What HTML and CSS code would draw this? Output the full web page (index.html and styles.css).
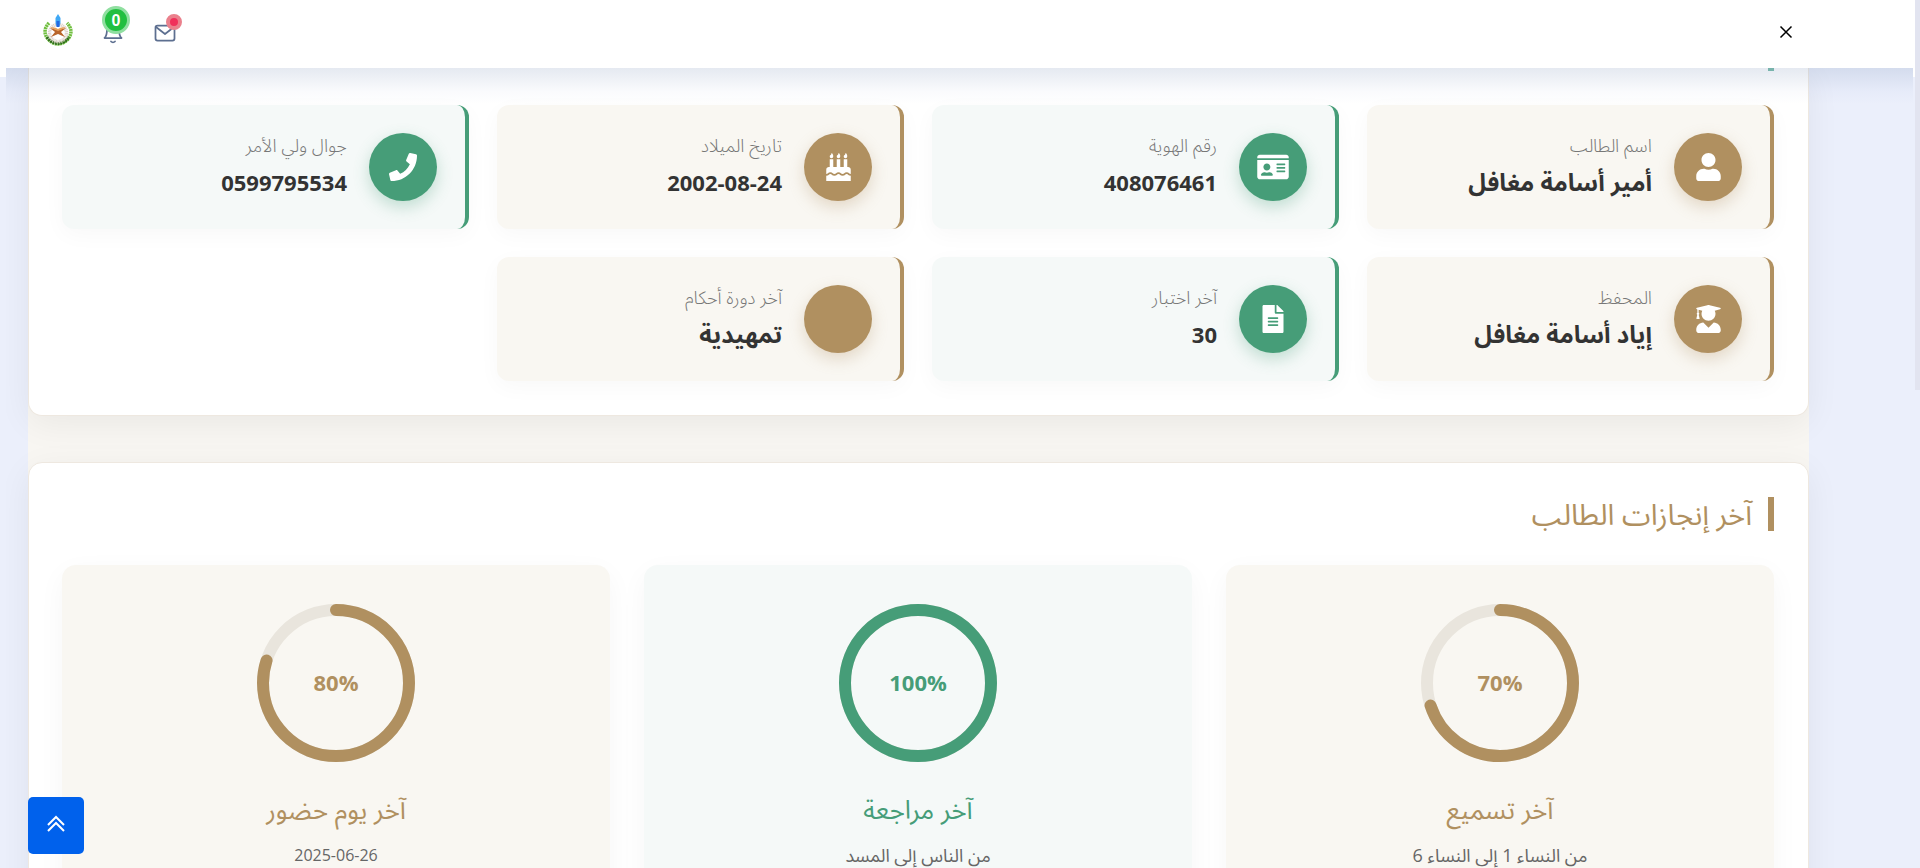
FILE: index.html
```html
<!DOCTYPE html>
<html lang="ar" dir="rtl">
<head>
<meta charset="utf-8">
<meta name="viewport" content="width=device-width, initial-scale=1">
<title>لوحة الطالب</title>
<link rel="stylesheet" href="styles.css">
</head>
<body>
<svg class="sprite" aria-hidden="true">
  <symbol id="i-user" viewBox="0 0 448 512"><path d="M224 256c70.7 0 128-57.3 128-128S294.7 0 224 0 96 57.3 96 128s57.3 128 128 128zm89.6 32h-16.7c-22.2 10.2-46.9 16-72.9 16s-50.6-5.8-72.9-16h-16.7C60.2 288 0 348.2 0 422.4V464c0 26.5 21.5 48 48 48h352c26.5 0 48-21.5 48-48v-41.6c0-74.2-60.2-134.4-134.4-134.4z"/></symbol>
  <symbol id="i-id" viewBox="0 0 576 512"><path d="M528 32H48C21.5 32 0 53.5 0 80v16h576V80c0-26.5-21.5-48-48-48zM0 432c0 26.5 21.5 48 48 48h480c26.5 0 48-21.5 48-48V128H0v304zm352-232c0-4.4 3.6-8 8-8h144c4.4 0 8 3.6 8 8v16c0 4.400-3.600 8-8 8H360c-4.400 0-8-3.600-8-8v-16zm0 64c0-4.400 3.600-8 8-8h144c4.400 0 8 3.600 8 8v16c0 4.400-3.600 8-8 8H360c-4.400 0-8-3.600-8-8v-16zm0 64c0-4.400 3.600-8 8-8h144c4.400 0 8 3.600 8 8v16c0 4.400-3.600 8-8 8H360c-4.400 0-8-3.600-8-8v-16zM176 192c35.300 0 64 28.700 64 64s-28.700 64-64 64-64-28.700-64-64 28.700-64 64-64zM67.100 396.200C75.500 370.500 99.600 352 128 352h8.200c12.300 5.100 25.700 8 39.800 8s27.600-2.900 39.800-8h8.200c28.400 0 52.500 18.500 60.900 44.200 3.200 9.900-5.200 19.800-15.600 19.800H82.700c-10.400 0-18.800-10-15.600-19.800z"/></symbol>
  <symbol id="i-cake" viewBox="0 0 448 512"><path d="M448 384c-28 0-31.300-32-74.500-32-43.400 0-46.800 32-74.750 32-27.700 0-31.450-32-74.750-32-42.840 0-47.220 32-74.500 32-28.150 0-31.200-32-74.750-32C31.200 352 28.100 384 0 384v-80c0-26.500 21.500-48 48-48h16V112h64v144h64V112h64v144h64V112h64v144h16c26.500 0 48 21.500 48 48v80zm0 128H0v-96c43.360 0 46.770-32 74.750-32 27.950 0 31.250 32 74.750 32 42.840 0 47.220-32 74.500-32 28.150 0 31.200 32 74.750 32 43.360 0 46.770-32 74.750-32 27.490 0 31.250 32 74.500 32v96zM96 96c-17.750 0-32-14.250-32-32 0-31 32-23 32-64 12 0 32 29.500 32 56s-14.250 40-32 40zm128 0c-17.750 0-32-14.250-32-32 0-31 32-23 32-64 12 0 32 29.500 32 56s-14.250 40-32 40zm128 0c-17.750 0-32-14.250-32-32 0-31 32-23 32-64 12 0 32 29.500 32 56s-14.250 40-32 40z"/></symbol>
  <symbol id="i-phone" viewBox="0 0 512 512"><path d="M493.4 24.6l-104-24c-11.300-2.600-22.900 3.300-27.500 13.900l-48 112c-4.200 9.800-1.400 21.300 6.900 28l60.600 49.600c-36 76.700-98.900 140.500-177.200 177.200l-49.600-60.600c-6.800-8.300-18.200-11.100-28-6.900l-112 48C3.900 366.500-2 378.100.6 389.400l24 104C27.100 504.200 36.700 512 48 512c256.100 0 464-207.500 464-464 0-11.200-7.700-20.900-18.600-23.400z"/></symbol>
  <symbol id="i-graduate" viewBox="0 0 448 512"><path d="M319.400 320.600L224 416l-95.400-95.400C57.100 323.700 0 382.200 0 454.400v9.600c0 26.500 21.500 48 48 48h352c26.500 0 48-21.500 48-48v-9.600c0-72.200-57.100-130.700-128.600-133.800zM13.600 79.800l6.400 1.500v58.400c-7 4.200-12 11.500-12 20.300 0 8.400 4.600 15.400 11.100 19.700L3.500 242c-1.700 6.900 2.100 14 7.600 14h41.800c5.500 0 9.300-7.100 7.600-14l-15.600-62.300C51.400 175.400 56 168.400 56 160c0-8.800-5-16.100-12-20.300V87.100l66 15.900c-8.600 17.200-14 36.400-14 57 0 70.700 57.300 128 128 128s128-57.300 128-128c0-20.600-5.300-39.800-14-57l96.300-23.200c18.200-4.400 18.200-27.100 0-31.500l-190.400-46c-13-3.100-26.700-3.100-39.700 0L13.600 48.200c-18.100 4.400-18.100 27.200 0 31.600z"/></symbol>
  <symbol id="i-file" viewBox="0 0 384 512"><path d="M224 136V0H24C10.700 0 0 10.700 0 24v464c0 13.300 10.700 24 24 24h336c13.300 0 24-10.700 24-24V160H248c-13.200 0-24-10.800-24-24zm64 236c0 6.600-5.400 12-12 12H108c-6.600 0-12-5.400-12-12v-8c0-6.600 5.400-12 12-12h168c6.600 0 12 5.400 12 12v8zm0-64c0 6.600-5.400 12-12 12H108c-6.600 0-12-5.400-12-12v-8c0-6.600 5.400-12 12-12h168c6.600 0 12 5.400 12 12v8zm0-72v8c0 6.600-5.400 12-12 12H108c-6.600 0-12-5.400-12-12v-8c0-6.600 5.400-12 12-12h168c6.600 0 12 5.400 12 12zm96-114.100v6.100H256V0h6.100c6.400 0 12.500 2.500 17 7l97.900 98c4.500 4.500 7 10.600 7 16.900z"/></symbol>
</svg>

<header class="topbar">
  <button class="icon-btn close" type="button" aria-label="إغلاق القائمة">
    <svg width="14" height="14" viewBox="0 0 14 14"><path d="M1.500 1.500l11 11M12.500 1.500l-11 11"/></svg>
  </button>
  <nav class="tools">
    <button class="icon-btn" type="button" aria-label="الرسائل">
      <svg class="line" width="24" height="24" viewBox="0 0 24 24"><rect x="2.500" y="4.500" width="19" height="15" rx="2"/><path d="M3 6l9 7 9-7"/></svg>
      <span class="dot"></span>
    </button>
    <button class="icon-btn" type="button" aria-label="الإشعارات">
      <svg class="line" width="24" height="24" viewBox="0 0 24 24"><path d="M18 8A6 6 0 0 0 6 8c0 7-2.500 9-2.500 9h17S18 15 18 8M14 20.500a2.500 2 0 0 1-4 0"/></svg>
      <span class="badge">0</span>
    </button>
    <a class="logo" href="#" aria-label="الرئيسية">
      <svg width="30" height="32" viewBox="0 0 30 32">
        <g fill="none">
          <path d="M6 9C2 13 0 19 5 25c3 3.500 6.500 5 10 5s7-1.500 10-5c5-6 3-12-1-16" stroke="#6fbe3e" stroke-width="3.500" stroke-dasharray="2 .6"/>
          <path d="M4 23c5 8.500 17 8.500 22 0" stroke="#2f6b1d" stroke-width="3" stroke-dasharray="2 .6"/>
          <circle cx="15" cy="19" r="8.500" stroke="#ddd0c8" stroke-width="3.500" stroke-dasharray="1 .6"/>
        </g>
        <path d="M7 14l8 2 8-2-5 4 4 5-7-3-7 3 4-5z" fill="#b9652b"/>
        <path d="M7 13.500q5-1 8 1.500 3-2.500 8-1.500l-8 3.500z" fill="#e8a25c"/>
        <path d="M15 0l2.500 4v5l-1 3h-3l-1-3V4z" fill="#3fa8f5"/>
        <path d="M13.500 7h3v6h-3z" fill="#2468e0"/>
      </svg>
    </a>
  </nav>
</header>

<main class="page">
  <div class="content">
    <section class="panel panel-info">
      <div class="title-mark"></div>
      <div class="info-grid">
        <article class="info gold"><span class="disc"><svg width="25" height="28"><use href="#i-user"/></svg></span><div class="info-text"><p class="label">اسم الطالب</p><p class="value">أمير أسامة مغافل</p></div></article>
        <article class="info green"><span class="disc"><svg width="32" height="28"><use href="#i-id"/></svg></span><div class="info-text"><p class="label">رقم الهوية</p><p class="value num">408076461</p></div></article>
        <article class="info gold"><span class="disc"><svg width="25" height="28"><use href="#i-cake"/></svg></span><div class="info-text"><p class="label">تاريخ الميلاد</p><p class="value num"><bdi dir="ltr">2002-08-24</bdi></p></div></article>
        <article class="info green"><span class="disc"><svg width="28" height="28"><use href="#i-phone"/></svg></span><div class="info-text"><p class="label">جوال ولي الأمر</p><p class="value num">0599795534</p></div></article>
        <article class="info gold"><span class="disc"><svg width="25" height="28"><use href="#i-graduate"/></svg></span><div class="info-text"><p class="label">المحفظ</p><p class="value">إياد أسامة مغافل</p></div></article>
        <article class="info green"><span class="disc"><svg width="22" height="28"><use href="#i-file"/></svg></span><div class="info-text"><p class="label">آخر اختبار</p><p class="value num">30</p></div></article>
        <article class="info gold"><span class="disc"></span><div class="info-text"><p class="label">آخر دورة أحكام</p><p class="value">تمهيدية</p></div></article>
      </div>
    </section>

    <section class="panel panel-progress">
      <h2 class="title">آخر إنجازات الطالب</h2>
      <div class="progress-grid">
        <article class="progress gold">
          <div class="ring"><svg width="158" height="158" viewBox="0 0 158 158"><circle class="track" cx="79" cy="79" r="73"/><circle class="bar" cx="79" cy="79" r="73" pathLength="100" stroke-dasharray="70 100"/></svg><bdi class="pct" dir="ltr">70%</bdi></div>
          <h3 class="name">آخر تسميع</h3>
          <p class="detail">من النساء 1 إلى النساء 6</p>
        </article>
        <article class="progress green">
          <div class="ring"><svg width="158" height="158" viewBox="0 0 158 158"><circle class="track" cx="79" cy="79" r="73"/><circle class="bar" cx="79" cy="79" r="73"/></svg><bdi class="pct" dir="ltr">100%</bdi></div>
          <h3 class="name">آخر مراجعة</h3>
          <p class="detail">من الناس إلى المسد</p>
        </article>
        <article class="progress gold">
          <div class="ring"><svg width="158" height="158" viewBox="0 0 158 158"><circle class="track" cx="79" cy="79" r="73"/><circle class="bar" cx="79" cy="79" r="73" pathLength="100" stroke-dasharray="80 100"/></svg><bdi class="pct" dir="ltr">80%</bdi></div>
          <h3 class="name">آخر يوم حضور</h3>
          <p class="detail num"><bdi dir="ltr">2025-06-26</bdi></p>
        </article>
      </div>
    </section>
  </div>
</main>

<div class="scroll-thumb"></div>
<button class="to-top" type="button" aria-label="إلى الأعلى">
  <svg width="20" height="20" viewBox="0 0 20 20"><path d="M2 11l8-8 8 8M2 17l8-8 8 8"/></svg>
</button>
</body>
</html>
```
FILE: styles.css
```css
* { box-sizing: border-box; }

:root {
  --gold: #b09060;
  --green: #469d78;
}

body {
  margin: 0;
  height: 100vh;
  overflow: hidden;
  display: flex;
  flex-direction: column;
  background: #ebeffb;
  font-family: "Open Sans", "Noto Sans Arabic", "Noto Kufi Arabic", "DejaVu Sans", sans-serif;
  color: #333;
}

/* taller white backing that shows at both ends of the top bar */
body::before {
  content: "";
  position: absolute;
  top: 0;
  right: 5px;
  left: 0;
  height: 77px;
  background: #fff;
}

p, h2, h3 { margin: 0; font-weight: 400; }

.sprite { position: absolute; width: 0; height: 0; }

.topbar {
  position: relative;
  z-index: 2;
  flex: none;
  height: 68px;
  margin-right: 5px;
  padding: 0 122px 4px 43px;
  display: flex;
  align-items: center;
  justify-content: space-between;
  background: #fff;
}

.tools { display: flex; align-items: center; gap: 28px; padding-bottom: 4px; }

.icon-btn {
  position: relative;
  display: flex;
  padding: 0;
  border: 0;
  background: none;
}

.close path { stroke: #000; stroke-width: 1.5; fill: none; }

.line { fill: none; stroke: #5d6f90; stroke-width: 1.75; stroke-linecap: round; stroke-linejoin: round; margin-top: 6px; }

.dot {
  position: absolute;
  top: -1px;
  right: -5px;
  width: 16px;
  height: 16px;
  border: 4px solid #ea808c;
  border-radius: 50%;
  background: #f0305a;
}

.badge {
  position: absolute;
  top: -9px;
  left: 1px;
  width: 28px;
  height: 28px;
  border: 3px solid #90dfa0;
  border-radius: 50%;
  background: #22bf40;
  color: #fff;
  font-size: 16px;
  font-weight: 600;
  line-height: 24px;
  text-align: center;
}

.logo { display: flex; }

.page {
  position: relative;
  flex: 1;
  min-height: 0;
  overflow: hidden;
  margin: 0 7px 0 6px;
  padding: 0 104px 0 22px;
  background: #ebeffb;
}

/* shade cast by the top bar */
.page::after {
  content: "";
  position: absolute;
  top: 0;
  right: 0;
  left: 0;
  height: 36px;
  background: linear-gradient(rgba(80, 110, 160, 0.15), rgba(90, 115, 180, 0.03) 65%, transparent);
}

.content {
  display: flex;
  flex-direction: column;
  gap: 46px;
  background: #f8f6f2;
}

.panel {
  padding: 34px 34px 34px 33px;
  border: 1px solid #eee8e0;
  border-radius: 14px;
  background: #fff;
  box-shadow: 0 8px 34px rgba(0, 0, 0, 0.06);
}

.panel-info { padding-top: 0; border-top: 0; border-radius: 0 0 14px 14px; }

.title-mark { width: 6px; height: 3px; margin-bottom: 34px; background: #7fbfae; }

.info-grid { display: grid; grid-template-columns: repeat(4, 1fr); gap: 28px; }

.info {
  display: flex;
  align-items: center;
  gap: 22px;
  height: 124px;
  padding: 0 28px;
  border-right: 4px solid;
  border-radius: 12px;
  box-shadow: 0 6px 22px rgba(0, 0, 0, 0.03);
}

.gold { border-color: var(--gold); background: #f9f7f2; }
.green { border-color: var(--green); background: #f5f9f8; }

.disc {
  flex: none;
  display: flex;
  align-items: center;
  justify-content: center;
  width: 68px;
  height: 68px;
  border-radius: 50%;
  fill: #fff;
}

.gold .disc { background: var(--gold); box-shadow: 0 6px 16px rgba(176, 144, 96, 0.3); }
.green .disc { background: var(--green); box-shadow: 0 6px 16px rgba(70, 157, 120, 0.3); }

.info-text { display: flex; flex-direction: column; gap: 2px; padding-bottom: 6px; }
.label { font-size: 18px; line-height: 34px; font-weight: 300; color: #777; }
.value { font-size: 24px; line-height: 36px; font-weight: 700; }
.value.num { font-size: 22px; }

.title {
  padding-right: 16px;
  border-right: 6px solid var(--gold);
  font-size: 29px;
  line-height: 34px;
  color: var(--gold);
}

.progress-grid { display: grid; grid-template-columns: repeat(3, 1fr); gap: 34px; margin-top: 34px; }

.progress {
  display: flex;
  flex-direction: column;
  align-items: center;
  padding: 39px 28px;
  border-radius: 14px;
  box-shadow: 0 8px 28px rgba(0, 0, 0, 0.04);
}

.ring { display: grid; place-items: center; }
.ring > * { grid-area: 1 / 1; }
.track, .bar { fill: none; stroke-width: 12; }
.track { stroke: #e9e5dd; }
.bar { stroke: currentColor; stroke-linecap: round; transform: rotate(-90deg); transform-origin: center; }
.pct { font-size: 22px; font-weight: 700; line-height: 32px; padding-bottom: 2px; }
.progress.gold .ring, .progress.gold .name { color: var(--gold); }
.progress.green .ring, .progress.green .name { color: var(--green); }
.name { margin-top: 27px; font-size: 26px; line-height: 40px; }
.detail { margin-top: 11px; font-size: 18px; line-height: 30px; color: #666; }
.detail.num { font-size: 16px; }

.scroll-thumb {
  position: absolute;
  top: 0;
  right: 0;
  width: 5px;
  height: 390px;
  background: #e2e4f0;
}

.to-top {
  position: absolute;
  z-index: 3;
  bottom: 14px;
  left: 28px;
  display: flex;
  align-items: center;
  justify-content: center;
  width: 56px;
  height: 57px;
  padding: 0 0 4px;
  border: 0;
  border-radius: 5px;
  background: #0061ec;
}

.to-top path { fill: none; stroke: #fff; stroke-width: 2; }
```
